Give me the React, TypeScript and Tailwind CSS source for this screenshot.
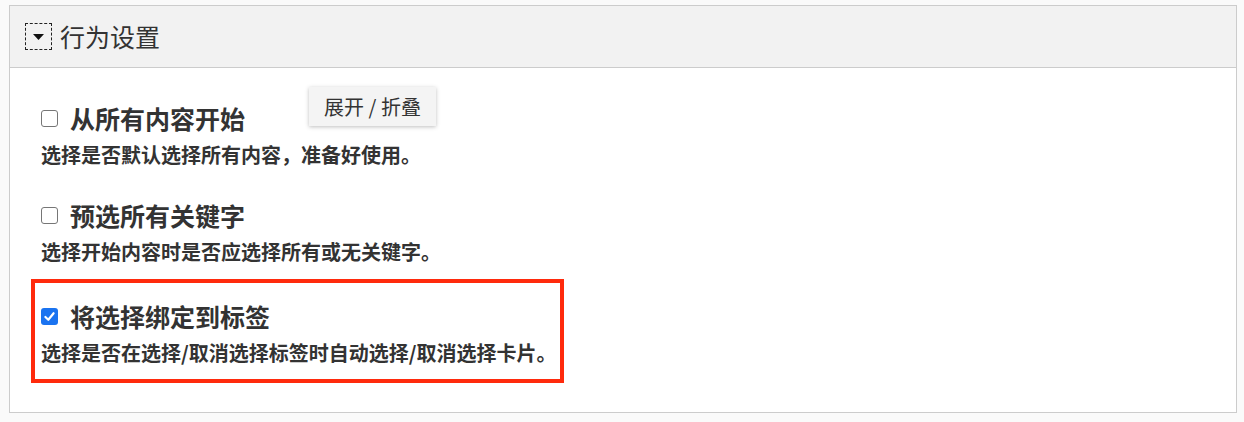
import React from 'react';

const font = { fontFamily: '"Noto Sans CJK SC", "Noto Sans", sans-serif' };

const Box = ({ checked }: { checked: boolean }) =>
  checked ? (
    <span className="w-[17px] h-[17px] rounded-[3px] bg-[#1a73f0] flex items-center justify-center shrink-0">
      <svg width="13" height="13" viewBox="0 0 12 12">
        <path d="M2.2 6.4 L4.9 9 L9.8 3" fill="none" stroke="white" strokeWidth="2" strokeLinecap="round" strokeLinejoin="round" />
      </svg>
    </span>
  ) : (
    <span className="w-[17px] h-[17px] rounded-[3px] border border-[#767676] bg-white shrink-0" />
  );

const Option = ({ label, desc, checked, className }: { label: string; desc: string; checked: boolean; className: string }) => (
  <div className={className}>
    <div className="flex items-center gap-[12px] h-[30px]">
      <Box checked={checked} />
      <span className="text-[25px] font-bold text-[#333] leading-[30px]">{label}</span>
    </div>
    <div className="mt-[9px] text-[20px] font-semibold text-[#333] leading-[26px]">{desc}</div>
  </div>
);

export default function App() {
  return (
    <div className="min-h-screen bg-[#fafafa] pt-[5px] pl-[9px]" style={font}>
      <div className="relative w-[1228px] h-[408px] border border-[#cccccc] bg-white">
        <div className="h-[62px] bg-[#f2f2f2] border-b border-[#cccccc] flex items-center pl-[15px]">
          <div className="w-[27px] h-[27px] border border-dashed border-[#222] flex items-center justify-center">
            <svg width="11" height="6" viewBox="0 0 11 6">
              <path d="M0 0 L11 0 L5.5 6 Z" fill="#111" />
            </svg>
          </div>
          <span className="ml-[8px] text-[25px] text-[#333] leading-none">行为设置</span>
        </div>

        <div className="pl-[31px] pt-[35px]">
          <Option className="" checked={false} label="从所有内容开始" desc="选择是否默认选择所有内容，准备好使用。" />
          <Option className="mt-[32px]" checked={false} label="预选所有关键字" desc="选择开始内容时是否应选择所有或无关键字。" />
          <Option className="mt-[36px]" checked={true} label="将选择绑定到标签" desc="选择是否在选择/取消选择标签时自动选择/取消选择卡片。" />
        </div>

        <div className="absolute left-[21px] top-[273px] w-[533px] h-[104px] border-[4px] border-[#ff2a0c] pointer-events-none" />

        <div className="absolute left-[299px] top-[81px] w-[127px] h-[39px] bg-[#f4f4f4] shadow-[0_1px_4px_rgba(0,0,0,0.25)] flex items-center justify-center text-[20px] text-[#333]">
          展开 / 折叠
        </div>
      </div>
    </div>
  );
}
